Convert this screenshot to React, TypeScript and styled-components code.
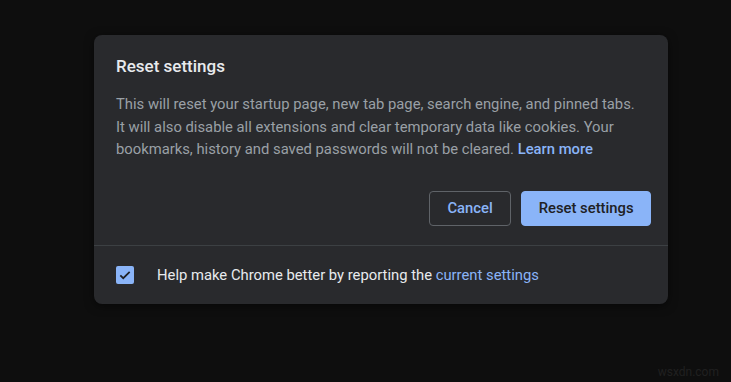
import styled, {createGlobalStyle} from 'styled-components';

const Global = createGlobalStyle`
  html, body {
    margin: 0;
    padding: 0;
    background: #0e0e0e;
    font-family: Roboto, "Liberation Sans", sans-serif;
  }
`;

const Page = styled.div`
  position: relative;
  width: 731px;
  height: 382px;
  padding: 35px 0 0 94px;
  box-sizing: border-box;
`;

const Dialog = styled.div`
  width: 574px;
  background: #292a2d;
  border-radius: 8px;
  box-shadow: 0 2px 10px rgba(0, 0, 0, 0.5);
`;

const Body = styled.div`
  padding: 20px 17px 19px 22px;
`;

const Title = styled.h2`
  margin: 0 0 16px;
  font-size: 17px;
  font-weight: 500;
  color: #e8eaed;
  line-height: 22px;
`;

const Text = styled.p`
  margin: 0;
  font-size: 14.8px;
  line-height: 22.5px;
  color: #9aa0a6;
  white-space: nowrap;
`;

const Link = styled.a<{ $bold?: boolean }>`
  color: #8ab4f8;
  text-decoration: none;
  font-weight: ${p => (p.$bold ? 500 : 400)};
`;

const Actions = styled.div`
  display: flex;
  justify-content: flex-end;
  gap: 10px;
  margin-top: 30px;
`;

const Button = styled.button<{ $primary?: boolean }>`
  height: 35px;
  padding: 0 ${p => (p.$primary ? 16.5 : 17.5)}px;
  border-radius: 4px;
  font-family: inherit;
  font-size: 14.8px;
  font-weight: 500;
  border: 1px solid ${p => (p.$primary ? '#8ab4f8' : '#5f6368')};
  background: ${p => (p.$primary ? '#8ab4f8' : 'transparent')};
  color: ${p => (p.$primary ? '#202124' : '#8ab4f8')};
`;

const Footer = styled.div`
  display: flex;
  align-items: center;
  gap: 23px;
  padding: 0 22px;
  height: 58px;
  border-top: 1px solid #3c4043;
`;

const Check = styled.span`
  display: flex;
  align-items: center;
  justify-content: center;
  width: 18px;
  height: 18px;
  border-radius: 2px;
  background: #8ab4f8;
`;

const FooterText = styled.span`
  font-size: 14.8px;
  color: #e8eaed;
`;

const Watermark = styled.span`
  position: absolute;
  right: 12px;
  bottom: 3px;
  font-size: 12px;
  color: #202020;
`;

export default function App() {
    return (
        <Page>
            <Global/>
            <Dialog>
                <Body>
                    <Title>Reset settings</Title>
                    <Text>
                        This will reset your startup page, new tab page, search engine, and pinned tabs.<br/>
                        It will also disable all extensions and clear temporary data like cookies. Your<br/>
                        bookmarks, history and saved passwords will not be cleared. <Link $bold>Learn more</Link>
                    </Text>
                    <Actions>
                        <Button>Cancel</Button>
                        <Button $primary>Reset settings</Button>
                    </Actions>
                </Body>
                <Footer>
                    <Check>
                        <svg width="14" height="14" viewBox="0 0 24 24">
                            <path d="M4 12.5l5 5L20 6.5" fill="none" stroke="#202124" strokeWidth="3"/>
                        </svg>
                    </Check>
                    <FooterText>
                        Help make Chrome better by reporting the <Link>current settings</Link>
                    </FooterText>
                </Footer>
            </Dialog>
            <Watermark>wsxdn.com</Watermark>
        </Page>
    );
}
